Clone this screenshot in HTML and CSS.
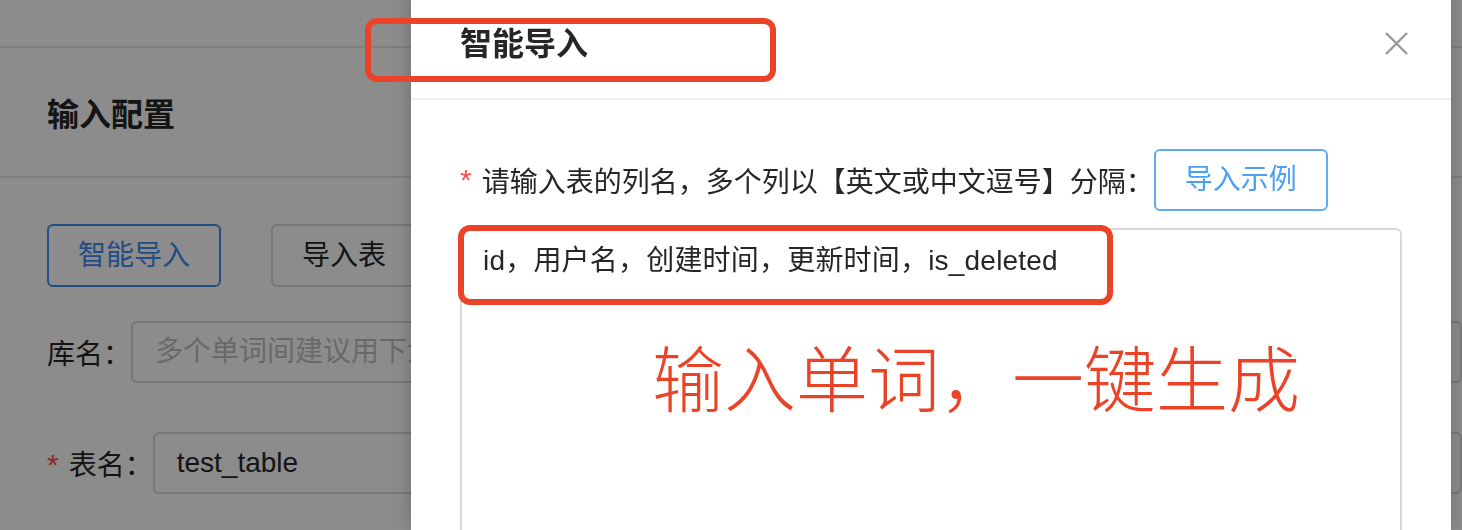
FILE: index.html
```html
<!DOCTYPE html>
<html lang="zh-CN">
<head>
  <meta charset="UTF-8" />
  <meta name="viewport" content="width=device-width, initial-scale=1.0" />
  <title>智能导入</title>
  <link rel="stylesheet" href="styles.css">
</head>
<body>

  <!-- 页面（被遮罩） -->
  <div class="page">
    <div class="topbar"></div>
    <div class="card">
      <div class="card-head">输入配置</div>
      <div class="card-body">
        <div class="btn-row">
          <button class="btn btn-primary">智能导入</button>
          <button class="btn">导入表</button>
        </div>
        <div class="form-row">
          <label class="form-label">库名：</label>
          <input class="form-input" type="text" placeholder="多个单词间建议用下划线分隔">
        </div>
        <div class="form-row form-row-gap">
          <label class="form-label"><span class="req">*</span>表名：</label>
          <input class="form-input" type="text" value="test_table">
        </div>
      </div>
    </div>
  </div>

  <div class="mask"></div>

  <!-- 智能导入弹窗 -->
  <div class="modal">
    <div class="modal-header">
      <span class="modal-title">智能导入</span>
      <span class="modal-close">
        <svg width="23" height="23" viewBox="0 0 23 23">
          <path d="M1 1 L22 22 M22 1 L1 22" stroke="#999" stroke-width="2.4" fill="none"/>
        </svg>
      </span>
    </div>
    <div class="modal-body">
      <div class="field-row">
        <span class="req">*</span><span class="field-label">请输入表的列名，多个列以【英文或中文逗号】分隔：</span>
        <button class="btn btn-outline">导入示例</button>
      </div>
      <textarea class="columns-input">id，用户名，创建时间，更新时间，is_deleted</textarea>
    </div>
  </div>

  <!-- 标注 -->
  <div class="mark mark-title"></div>
  <div class="mark mark-line"></div>
  <div class="mark-text">输入单词，一键生成</div>

</body>
</html>
```

FILE: styles.css
```css
* {
  box-sizing: border-box;
}

body {
  margin: 0;
  overflow: hidden;
  background-color: #fff;
  font-family: "Liberation Sans", "Noto Sans CJK SC", sans-serif;
  font-size: 28px;
  color: #262626;
}

.topbar {
  height: 48px;
  border-bottom: 2px solid #e8e8e8;
}

.card-head {
  height: 130px;
  display: flex;
  align-items: center;
  padding-left: 47px;
  font-size: 32px;
  font-weight: 700;
  border-bottom: 2px solid #e8e8e8;
}

.card-body {
  padding: 46px 0 0 47px;
}

.btn-row {
  display: flex;
  gap: 50px;
}

.btn {
  height: 63px;
  padding: 0 29px;
  font-family: inherit;
  font-size: 28px;
  line-height: 1;
  background: #fff;
  color: #262626;
  border: 2px solid #d9d9d9;
  border-radius: 6px;
  white-space: nowrap;
}

.btn-primary {
  color: #3f8cf0;
  border-color: #3f8cf0;
}

.form-row {
  display: flex;
  align-items: center;
  margin-top: 34px;
}

.form-row-gap {
  margin-top: 49px;
}

.form-label {
  white-space: nowrap;
}

.req {
  color: #ff4d4f;
  margin-right: 10px;
  font-size: 30px;
}

.form-input {
  flex: 1;
  height: 62px;
  padding: 0 22px;
  font-family: inherit;
  font-size: 28px;
  color: #262626;
  border: 2px solid #d9d9d9;
  border-radius: 6px;
}

.form-input::placeholder {
  color: #bfbfbf;
}

.mask {
  position: fixed;
  inset: 0;
  background-color: rgba(0, 0, 0, 0.45);
}

.modal {
  position: fixed;
  top: -10px;
  left: 411px;
  bottom: 0;
  width: 1040px;
  background-color: #fff;
  box-shadow: 0 0 20px rgba(0, 0, 0, 0.22);
}

.modal-header {
  position: relative;
  padding: 32px 49px;
  border-bottom: 2px solid #f0f0f0;
}

.modal-title {
  display: block;
  font-size: 32px;
  line-height: 44px;
  font-weight: 700;
}

.modal-close {
  position: absolute;
  top: 42px;
  right: 43px;
  width: 23px;
  height: 23px;
}

.modal-close svg {
  display: block;
}

.modal-body {
  padding: 49px 49px 0;
}

.field-row {
  display: flex;
  align-items: center;
  height: 62px;
}

.field-row .req {
  margin-right: 10px;
}

.btn-outline {
  width: 174px;
  height: 62px;
  color: #4ba0f2;
  border-color: #5eabf6;
}

.columns-input {
  display: block;
  width: 100%;
  height: 420px;
  margin-top: 17px;
  padding: 8px 21px;
  font-family: inherit;
  font-size: 28px;
  line-height: 46px;
  letter-spacing: 0.2px;
  color: #262626;
  border: 2px solid #d9d9d9;
  border-radius: 6px;
  resize: none;
}

.mark {
  position: absolute;
  border: 6px solid #ea4328;
  border-radius: 12px;
}

.mark-title {
  left: 365px;
  top: 18px;
  width: 411px;
  height: 64px;
}

.mark-line {
  left: 458px;
  top: 225px;
  width: 655px;
  height: 80px;
}

.mark-text {
  position: absolute;
  left: 652px;
  top: 339px;
  font-family: "Noto Sans CJK SC", sans-serif;
  font-size: 72px;
  font-weight: 300;
  line-height: 72px;
  color: #ea4328;
  white-space: nowrap;
}
```
